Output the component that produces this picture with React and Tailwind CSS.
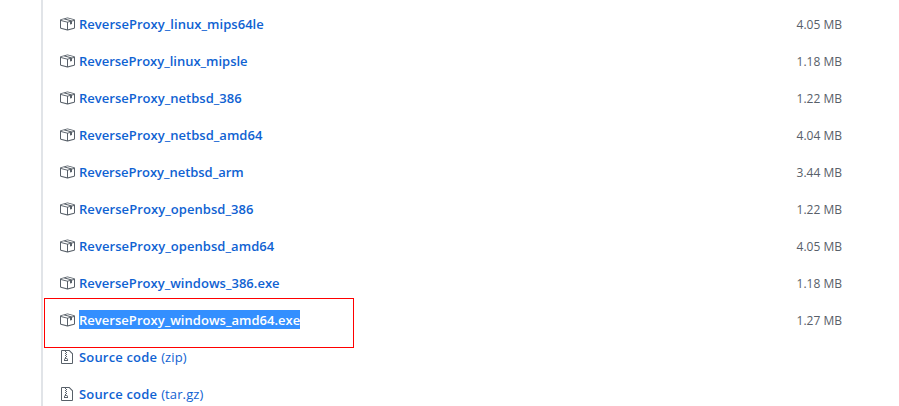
const binaries = [
  { name: 'ReverseProxy_linux_mips64le', size: '4.05 MB', track: 'tracking-[0.04px]' },
  { name: 'ReverseProxy_linux_mipsle', size: '1.18 MB', track: 'tracking-[-0.01px]' },
  { name: 'ReverseProxy_netbsd_386', size: '1.22 MB', track: 'tracking-[0.03px]' },
  { name: 'ReverseProxy_netbsd_amd64', size: '4.04 MB', track: 'tracking-[0.03px]' },
  { name: 'ReverseProxy_netbsd_arm', size: '3.44 MB', track: 'tracking-[-0.03px]' },
  { name: 'ReverseProxy_openbsd_386', size: '1.22 MB', track: 'tracking-[0.07px]' },
  { name: 'ReverseProxy_openbsd_amd64', size: '4.05 MB', track: 'tracking-[0.07px]' },
  { name: 'ReverseProxy_windows_386.exe', size: '1.18 MB', track: 'tracking-[0.03px]' },
  { name: 'ReverseProxy_windows_amd64.exe', size: '1.27 MB', track: 'tracking-[0.03px]', selected: true },
];

const archives = ['(zip)', '(tar.gz)'];

function PackageIcon() {
  return (
    <svg className="h-4 w-4 shrink-0" viewBox="0 0 16 16" fill="#586069">
      <path
        fillRule="evenodd"
        d="M1 4.27v7.47c0 .45.3.84.75.97l6.5 1.73c.16.05.34.05.5 0l6.5-1.73c.45-.13.75-.52.75-.97V4.27c0-.45-.3-.84-.75-.97l-6.5-1.74a1.4 1.4 0 0 0-.5 0L1.75 3.3c-.45.13-.75.52-.75.97zm7 9.09l-6-1.59V5l6 1.61v6.75zM2 4l2.5-.67L11 5.06l-2.5.67L2 4zm13 7.77l-6 1.59V6.61l2-.55V8.5l2-.53V5.53L15 5v6.77zm-2-7.24L6.5 2.8l2-.53L15 4l-2 .53z"
      />
    </svg>
  );
}

function ZipIcon() {
  return (
    <svg className="h-4 w-3 shrink-0" viewBox="0 0 12 16" fill="#586069">
      <path
        fillRule="evenodd"
        d="M8.5 1H1a1 1 0 0 0-1 1v12a1 1 0 0 0 1 1h10a1 1 0 0 0 1-1V4.5L8.5 1zM11 14H1V2h3v1h1V2h3l3 3v9zM5 4V3h1v1H5zM4 4h1v1H4V4zm1 2V5h1v1H5zM4 6h1v1H4V6zm1 2V7h1v1H5zM4 9.28A2 2 0 0 0 3 11v1h4v-1a2 2 0 0 0-2-2V8H4v1.28zM6 10v1H4v-1h2z"
      />
    </svg>
  );
}

function Row({ icon, children, size }) {
  return (
    <li className="flex h-[37px] items-start pt-2">
      <span className="mt-0.5 flex w-4 shrink-0 justify-center">{icon}</span>
      <a className="ml-1 h-[19px] whitespace-nowrap text-[13px] leading-[21px] text-[#0f62d2]">{children}</a>
      {size && (
        <span className="ml-auto whitespace-nowrap text-[12px] leading-[22px] text-[#586069]">{size}</span>
      )}
    </li>
  );
}

export default function App() {
  return (
    <div className="relative flex h-[406px] w-[899px] overflow-hidden bg-white font-['Open_Sans','Noto_Sans',sans-serif]">
      <ul className="ml-[41px] h-[416px] w-[801px] border-l-2 border-[#e1e4e8] pl-4 pt-[6px]">
        {binaries.map(({ name, size, track, selected }) => (
          <Row key={name} icon={<PackageIcon />} size={size}>
            <span className={`block h-[19px] font-semibold ${track} ${selected ? 'bg-[#338fff] text-white' : ''}`}>{name}</span>
          </Row>
        ))}
        {archives.map((kind) => (
          <Row key={kind} icon={<ZipIcon />}>
            <span className="font-semibold tracking-[0.17px]">Source code</span>
            <span className="ml-1 tracking-[0.12px]">{kind}</span>
          </Row>
        ))}
      </ul>
      <div className="absolute left-[44px] top-[298px] h-[50px] w-[310px] border border-[#ff0000]" />
    </div>
  );
}
